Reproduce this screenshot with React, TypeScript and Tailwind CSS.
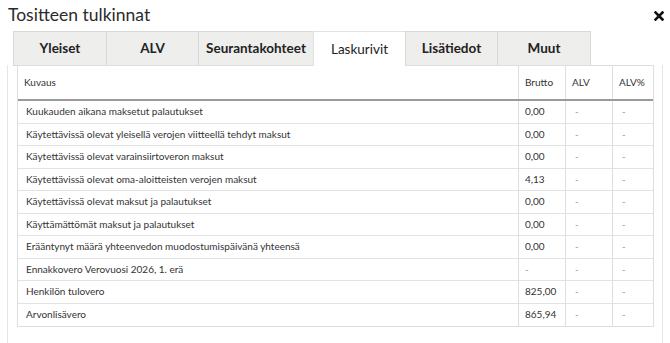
import React from "react";

const rows: [string, string][] = [
  ["Kuukauden aikana maksetut palautukset", "0,00"],
  ["Käytettävissä olevat yleisellä verojen viitteellä tehdyt maksut", "0,00"],
  ["Käytettävissä olevat varainsiirtoveron maksut", "0,00"],
  ["Käytettävissä olevat oma-aloitteisten verojen maksut", "4,13"],
  ["Käytettävissä olevat maksut ja palautukset", "0,00"],
  ["Käyttämättömät maksut ja palautukset", "0,00"],
  ["Erääntynyt määrä yhteenvedon muodostumispäivänä yhteensä", "0,00"],
  ["Ennakkovero Verovuosi 2026, 1. erä", "-"],
  ["Henkilön tulovero", "825,00"],
  ["Arvonlisävero", "865,94"],
];

const tabs: { label: string; w: string; active?: boolean }[] = [
  { label: "Yleiset", w: "w-[93px]" },
  { label: "ALV", w: "w-[92px]" },
  { label: "Seurantakohteet", w: "w-[115px]" },
  { label: "Laskurivit", w: "w-[92px]", active: true },
  { label: "Lisätiedot", w: "w-[92px]" },
  { label: "Muut", w: "w-[94px]" },
];

export default function App() {
  return (
    <div
      className="w-[670px] h-[343px] bg-white overflow-hidden flex flex-col text-[#333]"
      style={{ fontFamily: "Lato, 'Noto Sans', sans-serif" }}
    >
      <div className="h-[31px] flex items-start justify-between pl-[8px] pr-[5px] pt-[4px]">
        <div className="text-[17.5px] leading-[21px] text-[#2b2b2b]">Tositteen tulkinnat</div>
        <svg width="10" height="10" viewBox="0 0 10 10" className="mt-[7px] mr-[1px]">
          <path d="M1.5 1.5 L8.5 8.5 M8.5 1.5 L1.5 8.5" stroke="#111" strokeWidth="2.6" strokeLinecap="square" />
        </svg>
      </div>
      <div className="flex pl-[13px] h-[35px]">
        {tabs.map((t, i) => (
          <div
            key={t.label}
            className={`${t.w} h-[35px] flex items-center justify-center border-t border-l text-[13.5px] ${
              i === tabs.length - 1 ? "border-r" : ""
            } ${
              t.active
                ? "bg-white border-[#e2e2e2] font-normal text-[#222] relative z-10"
                : "bg-[#eeeeec] border-[#d8d8d6] border-b font-bold text-[#222]"
            }`}
          >
            {t.label}
          </div>
        ))}
      </div>
      <div className="flex-1 mx-[7px] border-l border-r border-[#e6e6e6] -mt-px pl-[9px] pr-[8px]">
        <div className="border border-[#dedede] text-[10px]">
          <div className="grid grid-cols-[501px_47px_47px_47px] h-[35px] border-b-2 border-[#9a9a9a]">
            <div className="flex items-center pl-[6px] border-r border-[#dedede]">Kuvaus</div>
            <div className="flex items-center pl-[6px] border-r border-[#dedede]">Brutto</div>
            <div className="flex items-center pl-[6px] border-r border-[#dedede]">ALV</div>
            <div className="flex items-center pl-[6px]">ALV%</div>
          </div>
          {rows.map(([label, val], i) => (
            <div
              key={i}
              className={`grid grid-cols-[501px_47px_47px_47px] h-[22.5px] ${
                i < rows.length - 1 ? "border-b border-[#e2e2e2]" : ""
              }`}
            >
              <div className="flex items-center pl-[8px] border-r border-[#dedede]">{label}</div>
              <div className={`flex items-center pl-[6px] border-r border-[#dedede] ${val === "-" ? "text-[#999]" : ""}`}>{val}</div>
              <div className="flex items-center pl-[9px] border-r border-[#dedede] text-[#999]">-</div>
              <div className="flex items-center pl-[9px] text-[#999]">-</div>
            </div>
          ))}
        </div>
      </div>
    </div>
  );
}
